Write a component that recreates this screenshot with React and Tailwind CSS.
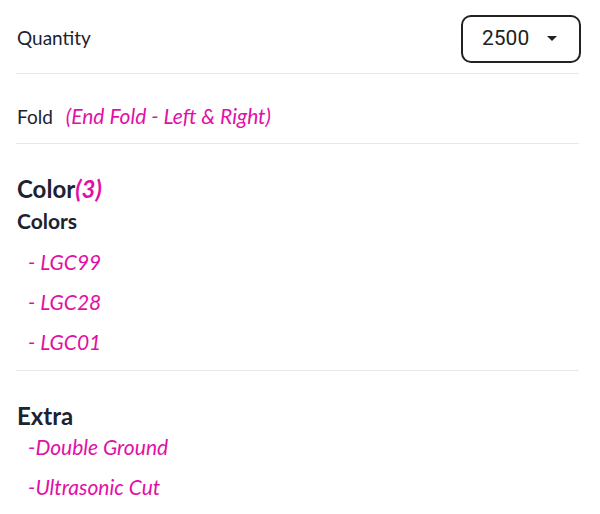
import React from 'react';

const pink = 'text-[#e20fa6]';

const App = () => {
    const colors = ['LGC99', 'LGC28', 'LGC01'];
    const extras = ['Double Ground', 'Ultrasonic Cut'];

    return (
        <div className="min-h-[514px] bg-white font-['Lato','Noto_Sans',sans-serif] text-[#1b2230]">
            <div className="ml-[16px] w-[563px]">
                {/* Quantity */}
                <div className="flex h-[74px] items-center justify-between border-b border-[#e5e8ec] pt-[4px]">
                    <span className="pl-px text-[19px]">Quantity</span>
                    <div className="-mr-[2px] flex h-[48px] w-[120px] items-center justify-between rounded-[10px] border-2 border-[#222] pl-[19px] pr-[22px]">
                        <span className="font-['Roboto',sans-serif] text-[21px] text-[#222]">2500</span>
                        <svg width="10" height="5" viewBox="0 0 10 5">
                            <path d="M0 0h10L5 5z" fill="#222" />
                        </svg>
                    </div>
                </div>

                {/* Fold */}
                <div className="h-[70px] border-b border-[#e5e8ec] pt-[28px] leading-[28px]">
                    <span className="pl-px text-[19px]">Fold</span>
                    <span className={`ml-[13px] text-[21px] italic ${pink}`}>(End Fold - Left &amp; Right)</span>
                </div>

                {/* Color */}
                <div className="border-b border-[#e5e8ec] pb-[8px] pt-[29px]">
                    <div className="pl-px text-[24px] font-bold leading-[32px]">
                        Color<span className={`italic ${pink}`}>(3)</span>
                    </div>
                    <div className="pl-px text-[21px] font-bold leading-[32px]">Colors</div>
                    <ul className="mt-[5px] pl-[12px]">
                        {colors.map(c => (
                            <li key={c} className={`text-[21px] italic leading-[40px] ${pink}`}>- {c}</li>
                        ))}
                    </ul>
                </div>

                {/* Extra */}
                <div className="pt-[33px]">
                    <div className="pl-px text-[24px] font-bold leading-[24px]">Extra</div>
                    <ul className="-mt-px pl-[12px]">
                        {extras.map(e => (
                            <li key={e} className={`text-[21px] italic leading-[40px] ${pink}`}>-{e}</li>
                        ))}
                    </ul>
                </div>
            </div>
        </div>
    );
};

export default App;
